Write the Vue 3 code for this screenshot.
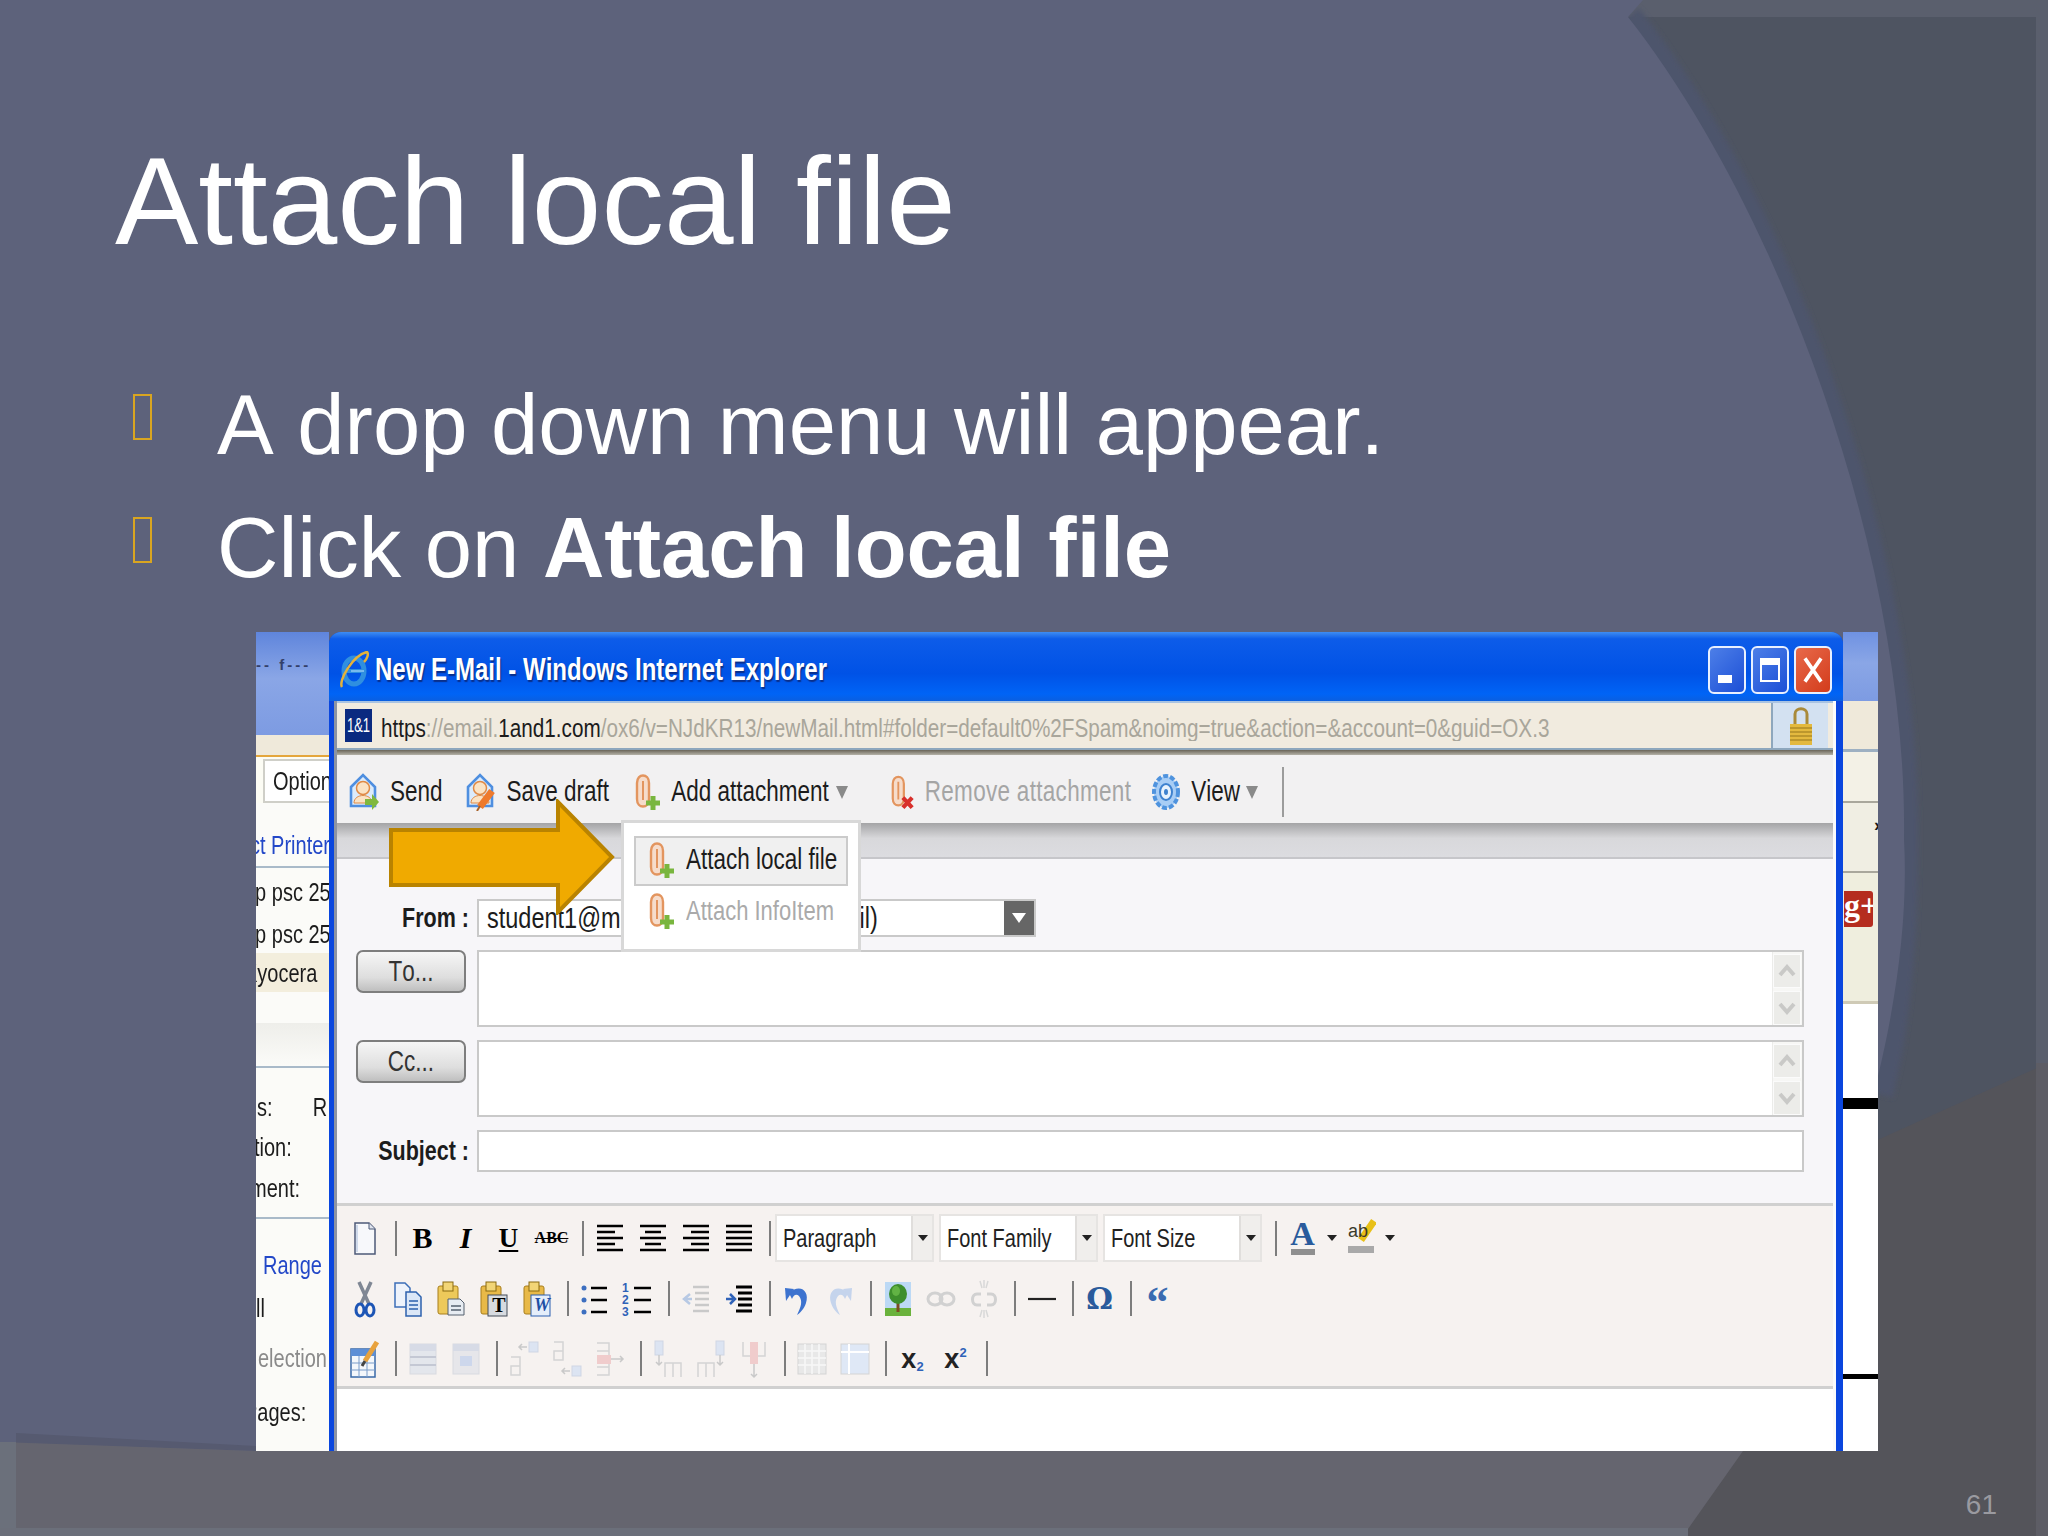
<template>
  <div class="slide">
    <!-- slide theme shapes -->
    <svg class="theme" viewBox="0 0 2048 1536" width="2048" height="1536">
      <defs>
        <filter id="soft"><feGaussianBlur stdDeviation="2.5" /></filter>
      </defs>
      <rect width="2048" height="1536" fill="#5a5f6d" />
      <rect x="1600" y="17" width="436" height="1519" fill="#4e5461" />
      <path d="M1800 1175 L2048 1063 V1536 H1600 V1400 Z" fill="#54545a" />
      <rect x="2036" y="1063" width="12" height="473" fill="#5d5d65" />
      <path d="M1628 17 C1780 210 1908 560 1904 839 C1904 920 1900 1010 1879 1094" fill="none" stroke="#4d546c" stroke-width="28" filter="url(#soft)" />
      <path d="M0 0 H1643 L1628 17 C1780 210 1908 560 1904 839 C1915 1040 1820 1310 1683 1536 H0 Z" fill="#5d627b" />
      <path d="M16 1433 L256 1446 V1451 H256 L16 1443 Z" fill="#565a70" />
      <path d="M0 1442 L256 1451 H1743 L1683 1536 H0 Z" fill="#65656f" />
      <rect y="1442" width="16" height="94" fill="#6b707b" />
      <rect y="1528" width="1688" height="8" fill="#6b6f7a" />
    </svg>

    <h1 class="title">Attach local file</h1>
    <ul class="bullets">
      <li><span class="marker"></span><span>A drop down menu will appear.</span></li>
      <li><span class="marker"></span><span>Click on <b>Attach local file</b></span></li>
    </ul>

    <div class="shot">
      <!-- page behind the popup, left side -->
      <div class="page-left">
        <div class="pl-blue"><span class="pl-dash">-- f---</span></div>
        <div class="pl-beige"></div>
        <div class="pl-option"><span class="opt-btn"><span class="s">Option</span></span></div>
        <div
          v-for="r in leftRows"
          :key="r.t + r.top + r.h"
          class="pl-row"
          :class="r.cls"
          :style="{ height: r.h + 'px', marginTop: r.top + 'px' }"
        >
          <span v-if="r.t" class="s" :style="{ marginLeft: r.x + 'px' }">{{ r.t }}</span>
          <span v-if="r.extra" class="s pl-extra">{{ r.extra }}</span>
        </div>
      </div>

      <!-- popup window -->
      <div class="win">
        <div class="titlebar">
          <svg class="ie" viewBox="0 0 30 38" width="30" height="38">
            <ellipse cx="15" cy="20" rx="10" ry="13" fill="none" stroke="#2f8fe0" stroke-width="5" />
            <path d="M6 20 H24" stroke="#2f8fe0" stroke-width="4" />
            <path d="M25 20 H12" stroke="#bfe3fa" stroke-width="1" />
            <path d="M3 36 C-1 30 14 4 28 1 C30 3 28 8 25 11" fill="none" stroke="#e3b23c" stroke-width="2.5" />
          </svg>
          <span class="win-title"><span class="s">New E-Mail - Windows Internet Explorer</span></span>
          <div class="win-btns">
            <span class="wb"><i class="min-mark"></i></span>
            <span class="wb"><i class="max-mark"></i></span>
            <span class="wb wb-close">
              <svg viewBox="0 0 38 48" width="34" height="44">
                <path d="M10 11 L28 37 M28 11 L10 37" stroke="#fff" stroke-width="4" />
              </svg>
            </span>
          </div>
        </div>

        <div class="win-body">
          <div class="addr">
            <span class="logo"><span class="logo-t">1&amp;1</span></span>
            <span class="url"><span class="s"><b class="dk">https</b>://email.<b class="dk">1and1.com</b>/ox6/v=NJdKR13/newMail.html#folder=default0%2FSpam&amp;noimg=true&amp;action=&amp;account=0&amp;guid=OX.3</span></span>
            <span class="lock-cell">
              <svg viewBox="0 0 24 38" width="24" height="38">
                <path d="M6 18 V7 C6 0 18 0 18 7 V18" fill="none" stroke="#a98a3a" stroke-width="3" />
                <rect x="1" y="17" width="22" height="21" fill="#e3b93f" />
                <path d="M1 21 H23 M1 25 H23 M1 29 H23 M1 33 H23" stroke="#b08c28" stroke-width="1.5" />
              </svg>
            </span>
          </div>
          <div class="addr-line"></div>

          <div class="toolbar">
            <div class="tb-item">
              <svg class="tb-ic" viewBox="0 0 30 38"><use href="#ic-send" /></svg>
              <span class="s">Send</span>
            </div>
            <div class="tb-item">
              <svg class="tb-ic" viewBox="0 0 30 38"><use href="#ic-draft" /></svg>
              <span class="s">Save draft</span>
            </div>
            <div class="tb-item tb-add">
              <svg class="tb-clip" viewBox="0 0 26 38"><use href="#ic-clip-add" /></svg>
              <span class="s">Add attachment</span>
              <i class="tri"></i>
            </div>
            <div class="tb-item tb-off">
              <svg class="tb-clip" viewBox="0 0 26 38"><use href="#ic-clip-del" /></svg>
              <span class="s">Remove attachment</span>
            </div>
            <div class="tb-item tb-view">
              <svg class="tb-ic" viewBox="0 0 30 38"><use href="#ic-gear" /></svg>
              <span class="s">View</span>
              <i class="tri"></i>
            </div>
            <span class="tb-sep"></span>
          </div>
          <div class="band"></div>

          <div class="form">
            <label class="lbl"><span class="s">From :</span></label>
            <div class="from-field">
              <span class="s">student1@m</span>
              <span class="s from-tail">il)</span>
              <span class="from-drop"><i></i></span>
            </div>

            <button class="addr-btn"><span class="s">To...</span></button>
            <div class="area">
              <div class="scroller">
                <span class="sb"><svg viewBox="0 0 26 30" width="26" height="30"><path d="M6 19 L13 11 L20 19" fill="none" stroke="#c9c9c7" stroke-width="4" /></svg></span>
                <span class="sb"><svg viewBox="0 0 26 30" width="26" height="30"><path d="M6 11 L13 19 L20 11" fill="none" stroke="#c9c9c7" stroke-width="4" /></svg></span>
              </div>
            </div>

            <button class="addr-btn"><span class="s">Cc...</span></button>
            <div class="area">
              <div class="scroller">
                <span class="sb"><svg viewBox="0 0 26 30" width="26" height="30"><path d="M6 19 L13 11 L20 19" fill="none" stroke="#c9c9c7" stroke-width="4" /></svg></span>
                <span class="sb"><svg viewBox="0 0 26 30" width="26" height="30"><path d="M6 11 L13 19 L20 11" fill="none" stroke="#c9c9c7" stroke-width="4" /></svg></span>
              </div>
            </div>

            <label class="lbl"><span class="s">Subject :</span></label>
            <div class="subject"></div>
          </div>

          <div class="editor-bar">
            <div v-for="(row, i) in editorRows" :key="i" class="ed-row">
              <template v-for="(it, j) in row" :key="j">
                <span v-if="it === '|'" class="sep"></span>
                <span v-else-if="it === 'drop'" class="cell-drop"><i></i></span>
                <div v-else-if="it.sel" class="sel">
                  <span class="sel-val"><span class="s">{{ it.sel }}</span></span>
                  <span class="sel-btn"><i></i></span>
                </div>
                <span v-else class="cell">
                  <svg v-if="it.i || typeof it === 'string'" class="ic" viewBox="0 0 30 40"><use :href="'#ic-' + (it.i || it)" /></svg>
                  <span v-if="it.t" class="gl" :class="it.c">{{ it.t }}<small v-if="it.small">{{ it.small }}</small></span>
                </span>
              </template>
            </div>
          </div>
          <div class="editor-body"></div>
        </div>
      </div>

      <!-- page behind the popup, right side -->
      <div class="page-right">
        <div class="pr-blue"></div>
        <div class="pr-beige"></div>
        <div class="pr-a"></div>
        <div class="pr-b"><span class="pr-x">›</span></div>
        <div class="pr-c"><span class="gplus">g+</span></div>
        <div class="pr-white"></div>
        <div class="pr-black"></div>
        <div class="pr-white2"></div>
        <div class="pr-black2"></div>
        <div class="pr-white3"></div>
      </div>

      <!-- dropdown and callout on top of the screenshot -->
      <div class="menu">
        <div class="menu-item active">
          <svg class="tb-clip" viewBox="0 0 26 38"><use href="#ic-clip-add" /></svg>
          <span class="s">Attach local file</span>
        </div>
        <div class="menu-item off">
          <svg class="tb-clip" viewBox="0 0 26 38"><use href="#ic-clip-add" /></svg>
          <span class="s">Attach InfoItem</span>
        </div>
      </div>
      <svg class="callout" viewBox="0 0 230 116" width="230" height="116">
        <path d="M3 31 H170 V3 L224 58 L170 113 V86 H3 Z" fill="#f0aa00" stroke="#b98300" stroke-width="4" />
      </svg>
    </div>

    <div class="page-num">61</div>

    <!-- icon sheet -->
    <svg class="defs" width="0" height="0">
      <symbol id="ic-send" viewBox="0 0 30 38">
        <path d="M2 14 L14 2 L26 14 V33 H2 Z" fill="#dcebfb" stroke="#4f8fe0" stroke-width="2.600" />
        <circle cx="14" cy="15" r="6.500" fill="#fbe3c4" stroke="#e08a45" stroke-width="1.500" />
        <path d="M5 30 C5 20 23 20 23 30 Z" fill="#fbe3c4" stroke="#e08a45" />
        <path d="M16 26 H23 V21 L30 29 L23 37 V32 H16 Z" fill="#7fb83f" />
      </symbol>
      <symbol id="ic-draft" viewBox="0 0 30 38">
        <path d="M2 14 L14 2 L26 14 V33 H2 Z" fill="#dcebfb" stroke="#4f8fe0" stroke-width="2.600" />
        <circle cx="14" cy="15" r="6.500" fill="#fbe3c4" stroke="#e08a45" stroke-width="1.500" />
        <path d="M5 30 C5 20 23 20 23 30 Z" fill="#fbe3c4" stroke="#e08a45" />
        <path d="M26 18 L14 34" stroke="#ee7a2c" stroke-width="7" />
        <path d="M14 33 L11 38" stroke="#a8622a" stroke-width="2" />
      </symbol>
      <symbol id="ic-clip-add" viewBox="0 0 26 38">
        <path d="M3 10 C3 0 15 0 15 10 V26 C15 36 3 36 3 26 Z" fill="#f6dccb" stroke="#e3955f" stroke-width="2.400" />
        <path d="M9 8 V27" stroke="#e3955f" stroke-width="2" />
        <path d="M19 23 V37 M12 30 H26" stroke="#79b63e" stroke-width="5" />
      </symbol>
      <symbol id="ic-clip-del" viewBox="0 0 26 38">
        <path d="M3 10 C3 0 15 0 15 10 V26 C15 36 3 36 3 26 Z" fill="#f6dccb" stroke="#e3955f" stroke-width="2.400" />
        <path d="M9 8 V27" stroke="#e3955f" stroke-width="2" />
        <path d="M14 25 L24 36 M24 25 L14 36" stroke="#d8302c" stroke-width="4.500" />
      </symbol>
      <symbol id="ic-gear" viewBox="0 0 30 38">
        <ellipse cx="15" cy="19" rx="12" ry="16" fill="#a8cdf5" stroke="#4f93de" stroke-width="4" stroke-dasharray="5 2" />
        <ellipse cx="15" cy="19" rx="6" ry="8" fill="#e9f3fd" stroke="#3f82cf" stroke-width="2" />
        <ellipse cx="15" cy="19" rx="2" ry="3" fill="#3f82cf" />
      </symbol>

      <symbol id="ic-doc" viewBox="0 0 30 40">
        <path d="M5 5 H19 L25 11 V36 H5 Z" fill="#f7f8fb" stroke="#4d5a78" stroke-width="1.5" />
        <path d="M19 5 V11 H25" fill="#dfe4ee" stroke="#4d5a78" />
        <path d="M7 7 V34" stroke="#cfd9ea" stroke-width="2" />
      </symbol>
      <symbol id="ic-al" viewBox="0 0 30 40">
        <path d="M2 8 H28 M2 14 H20 M2 20 H28 M2 26 H20 M2 32 H28" stroke="#000" stroke-width="2.600" />
      </symbol>
      <symbol id="ic-ac" viewBox="0 0 30 40">
        <path d="M2 8 H28 M7 14 H23 M2 20 H28 M7 26 H23 M2 32 H28" stroke="#000" stroke-width="2.600" />
      </symbol>
      <symbol id="ic-ar" viewBox="0 0 30 40">
        <path d="M2 8 H28 M10 14 H28 M2 20 H28 M10 26 H28 M2 32 H28" stroke="#000" stroke-width="2.600" />
      </symbol>
      <symbol id="ic-aj" viewBox="0 0 30 40">
        <path d="M2 8 H28 M2 14 H28 M2 20 H28 M2 26 H28 M2 32 H28" stroke="#000" stroke-width="2.600" />
      </symbol>

      <symbol id="ic-cut" viewBox="0 0 30 40">
        <path d="M9 3 L19 25 M21 3 L11 25" stroke="#7f8794" stroke-width="3.500" />
        <ellipse cx="10" cy="31" rx="4" ry="6" fill="none" stroke="#1d55b5" stroke-width="3" />
        <ellipse cx="20" cy="31" rx="4" ry="6" fill="none" stroke="#1d55b5" stroke-width="3" />
      </symbol>
      <symbol id="ic-copy" viewBox="0 0 30 40">
        <path d="M2 4 H12 L17 9 V28 H2 Z" fill="#eef3fb" stroke="#3d6fb8" stroke-width="1.500" />
        <path d="M13 13 H23 L28 18 V37 H13 Z" fill="#dbe7f7" stroke="#2e62ad" stroke-width="1.500" />
        <path d="M16 22 H25 M16 26 H25 M16 30 H25" stroke="#2e62ad" stroke-width="1.500" />
      </symbol>
      <symbol id="ic-paste" viewBox="0 0 30 40">
        <rect x="2" y="7" width="20" height="28" rx="2" fill="#edc95a" stroke="#a87f1c" />
        <rect x="7" y="3" width="10" height="9" fill="#f2d576" stroke="#8a6a10" />
        <path d="M12 20 H24 L28 24 V36 H12 Z" fill="#e7ecf2" stroke="#55606f" />
        <path d="M15 27 H25 M15 31 H25" stroke="#55606f" stroke-width="1.500" />
      </symbol>
      <symbol id="ic-ptext" viewBox="0 0 30 40">
        <rect x="2" y="7" width="20" height="28" rx="2" fill="#e8b948" stroke="#a87f1c" />
        <rect x="7" y="3" width="10" height="9" fill="#f2d576" stroke="#8a6a10" />
        <rect x="9" y="16" width="19" height="21" fill="#d7dbe0" stroke="#444c58" />
      </symbol>
      <symbol id="ic-pword" viewBox="0 0 30 40">
        <rect x="2" y="7" width="20" height="28" rx="2" fill="#e8b948" stroke="#a87f1c" />
        <rect x="7" y="3" width="10" height="9" fill="#f2d576" stroke="#8a6a10" />
        <rect x="9" y="16" width="19" height="21" fill="#e5eefa" stroke="#2a5fb0" />
      </symbol>
      <symbol id="ic-ul" viewBox="0 0 30 40">
        <circle cx="4" cy="9" r="2.500" fill="#3d6fc0" />
        <circle cx="4" cy="21" r="2.500" fill="#3d6fc0" />
        <circle cx="4" cy="33" r="2.500" fill="#3d6fc0" />
        <path d="M11 9 H27 M11 21 H27 M11 33 H27" stroke="#000" stroke-width="2.500" />
      </symbol>
      <symbol id="ic-ol" viewBox="0 0 30 40">
        <path d="M11 9 H28 M11 21 H28 M11 33 H28" stroke="#000" stroke-width="2.500" />
      </symbol>
      <symbol id="ic-out" viewBox="0 0 30 40">
        <path d="M12 8 H28 M14 14 H28 M14 20 H28 M14 26 H28 M12 32 H28" stroke="#c9c9c9" stroke-width="2.500" />
        <path d="M11 20 H5 M9 15 L3 20 L9 25" fill="none" stroke="#b7c9e4" stroke-width="2.500" />
      </symbol>
      <symbol id="ic-ind" viewBox="0 0 30 40">
        <path d="M12 8 H28 M14 14 H28 M14 20 H28 M14 26 H28 M12 32 H28" stroke="#000" stroke-width="2.800" />
        <path d="M2 20 H9 M6 15 L11 20 L6 25" fill="none" stroke="#2f62b8" stroke-width="2.500" />
      </symbol>
      <symbol id="ic-undo" viewBox="0 0 30 40">
        <path d="M7 14 C18 4 28 12 24 24 C22 30 18 34 15 36 C19 28 21 22 17 17 C14 14 11 17 10 20 Z" fill="#3d73cf" />
        <path d="M3 9 L12 10 L4 22 Z" fill="#3d73cf" />
      </symbol>
      <symbol id="ic-redo" viewBox="0 0 30 40">
        <path d="M23 14 C12 4 2 12 6 24 C8 30 12 34 15 36 C11 28 9 22 13 17 C16 14 19 17 20 20 Z" fill="#c5d4ec" />
        <path d="M27 9 L18 10 L26 22 Z" fill="#c5d4ec" />
      </symbol>
      <symbol id="ic-img" viewBox="0 0 30 40">
        <rect x="2" y="3" width="26" height="34" fill="#bcd9f5" />
        <rect x="2" y="29" width="26" height="8" fill="#6ab23c" />
        <path d="M15 33 V20" stroke="#7a4d22" stroke-width="3" />
        <ellipse cx="15" cy="15" rx="9" ry="10" fill="#3e8f2c" />
        <ellipse cx="13" cy="12" rx="4" ry="5" fill="#62b344" />
      </symbol>
      <symbol id="ic-link" viewBox="0 0 30 40">
        <ellipse cx="9" cy="20" rx="7" ry="6" fill="none" stroke="#d1d1d1" stroke-width="3" />
        <ellipse cx="21" cy="20" rx="7" ry="6" fill="none" stroke="#d1d1d1" stroke-width="3" />
      </symbol>
      <symbol id="ic-unlink" viewBox="0 0 30 40">
        <path d="M12 15 H8 C2 15 2 26 8 26 H12 M18 15 H22 C28 15 28 26 22 26 H18" fill="none" stroke="#d1d1d1" stroke-width="3" />
        <path d="M11 2 L13 9 M19 2 L17 9 M11 38 L13 31 M19 38 L17 31 M15 1 V9 M15 31 V39" stroke="#d8d8d8" stroke-width="1.500" />
      </symbol>
      <symbol id="ic-hr" viewBox="0 0 30 40">
        <path d="M1 20 H29" stroke="#222" stroke-width="2.200" />
      </symbol>

      <symbol id="ic-bar-a" viewBox="0 0 30 40">
        <rect x="3" y="31" width="24" height="6" fill="#8f8f8f" />
      </symbol>
      <symbol id="ic-back" viewBox="0 0 30 40">
        <path d="M28 3 L15 22" stroke="#e8c018" stroke-width="7" />
        <rect x="2" y="28" width="26" height="7" fill="#a9a9a9" />
      </symbol>

      <symbol id="ic-tedit" viewBox="0 0 30 40">
        <rect x="1" y="10" width="24" height="28" fill="#f4f7fb" stroke="#3a6aa8" stroke-width="1.500" />
        <rect x="1" y="10" width="24" height="7" fill="#5d8fd6" />
        <path d="M1 24 H25 M1 31 H25 M9 17 V38 M17 17 V38" stroke="#7b9cc9" />
        <path d="M27 3 L15 22" stroke="#e8a23c" stroke-width="5" />
        <path d="M15 22 L12 27" stroke="#444" stroke-width="3" />
      </symbol>
      <symbol id="ic-tr1" viewBox="0 0 30 40">
        <rect x="2" y="5" width="26" height="30" fill="#e3e6ec" stroke="#d8dae0" />
        <rect x="2" y="5" width="26" height="7" fill="#d7dbe6" />
        <path d="M2 18 H28 M2 26 H28" stroke="#c4c8d4" stroke-width="2" />
      </symbol>
      <symbol id="ic-tr2" viewBox="0 0 30 40">
        <rect x="2" y="5" width="26" height="30" fill="#e6e6ea" stroke="#d8dae0" />
        <rect x="2" y="5" width="26" height="7" fill="#d7dbe6" />
        <rect x="9" y="17" width="12" height="10" fill="#cdd7ec" />
      </symbol>
      <symbol id="ic-insl" viewBox="0 0 30 40">
        <path d="M2 18 H11 V27 H2 V36 H11 V27" fill="none" stroke="#d4d4d4" stroke-width="1.500" />
        <rect x="20" y="3" width="9" height="10" fill="#dce4f2" stroke="#cfd6e4" />
        <path d="M18 8 H10 M13 5 L10 8 L13 11" fill="none" stroke="#c9c9c9" stroke-width="1.500" />
      </symbol>
      <symbol id="ic-insr" viewBox="0 0 30 40">
        <path d="M2 3 H11 V12 H2 V21 H11 V12" fill="none" stroke="#d4d4d4" stroke-width="1.500" />
        <rect x="20" y="27" width="9" height="10" fill="#dce4f2" stroke="#cfd6e4" />
        <path d="M18 32 H10 M13 29 L10 32 L13 35" fill="none" stroke="#c9c9c9" stroke-width="1.500" />
      </symbol>
      <symbol id="ic-delr" viewBox="0 0 30 40">
        <path d="M2 4 H14 V36 H2 M2 12 H14 M2 28 H14" fill="none" stroke="#d4d4d4" stroke-width="1.500" />
        <rect x="2" y="16" width="14" height="9" fill="#f0cccc" />
        <path d="M16 20 H28 M25 17 L28 20 L25 23" fill="none" stroke="#c9c9c9" stroke-width="1.500" />
      </symbol>
      <symbol id="ic-col1" viewBox="0 0 30 40">
        <rect x="2" y="2" width="8" height="14" fill="#dce4f2" stroke="#cfd6e4" />
        <path d="M6 16 V26 M3 23 L6 26 L9 23" fill="none" stroke="#c9c9c9" stroke-width="1.500" />
        <path d="M12 38 V24 H28 V38 M20 24 V38" fill="none" stroke="#d4d4d4" stroke-width="1.500" />
      </symbol>
      <symbol id="ic-col2" viewBox="0 0 30 40">
        <rect x="20" y="2" width="8" height="14" fill="#dce4f2" stroke="#cfd6e4" />
        <path d="M24 16 V26 M21 23 L24 26 L27 23" fill="none" stroke="#c9c9c9" stroke-width="1.500" />
        <path d="M2 38 V24 H18 V38 M10 24 V38" fill="none" stroke="#d4d4d4" stroke-width="1.500" />
      </symbol>
      <symbol id="ic-col3" viewBox="0 0 30 40">
        <path d="M4 3 V17 H26 V3" fill="none" stroke="#d4d4d4" stroke-width="1.500" />
        <rect x="11" y="3" width="8" height="22" fill="#f0cccc" />
        <path d="M15 25 V38 M12 35 L15 38 L18 35" fill="none" stroke="#c9c9c9" stroke-width="1.500" />
      </symbol>
      <symbol id="ic-grid" viewBox="0 0 30 40">
        <rect x="1" y="5" width="28" height="30" fill="#e8e8e8" stroke="#d4d4d4" />
        <path d="M1 12 H29 M1 19 H29 M1 26 H29 M8 5 V35 M15 5 V35 M22 5 V35" stroke="#f7f7f7" stroke-width="1.500" />
      </symbol>
      <symbol id="ic-cellp" viewBox="0 0 30 40">
        <rect x="1" y="5" width="28" height="30" fill="#dfe8f6" stroke="#d4d4d4" />
        <path d="M1 13 H29 M9 5 V35" stroke="#fff" stroke-width="2" />
      </symbol>
    </svg>
  </div>
</template>

<script setup>
// Heights and offsets of the page peeking out behind the popup
const leftRows = [
  { t: 'ct Printer', h: 65, x: -6, top: 0, cls: 'link bb' },
  { t: 'np psc 25', h: 47, x: -12, top: 0 },
  { t: 'np psc 25', h: 38, x: -12, top: 0 },
  { t: 'Kyocera', h: 39, x: -12, top: 0, cls: 'beige' },
  { t: '', h: 31, x: 0, top: 0 },
  { t: '', h: 45, x: 0, top: 0, cls: 'soft bb' },
  { t: 'us:', h: 40, x: -10, top: 19, extra: 'R' },
  { t: 'tion:', h: 40, x: -2, top: 0 },
  { t: 'ment:', h: 42, x: -6, top: 0 },
  { t: '', h: 10, x: 0, top: 0, cls: 'bb' },
  { t: 'Range', h: 40, x: 7, top: 27, cls: 'link' },
  { t: 'll', h: 40, x: 0, top: 2 },
  { t: 'election', h: 40, x: 2, top: 10, cls: 'grey' },
  { t: 'Pages:', h: 40, x: -12, top: 14 }
]

const editorRows = [
  ['doc', '|', { t: 'B', c: 'g-b' }, { t: 'I', c: 'g-i' }, { t: 'U', c: 'g-u' }, { t: 'ABC', c: 'g-abc' }, '|',
    'al', 'ac', 'ar', 'aj', '|',
    { sel: 'Paragraph' }, { sel: 'Font Family' }, { sel: 'Font Size' }, '|',
    { i: 'bar-a', t: 'A', c: 'g-a' }, 'drop', { i: 'back', t: 'ab', c: 'g-ab' }, 'drop'],
  ['cut', 'copy', 'paste', { i: 'ptext', t: 'T', c: 'g-pt' }, { i: 'pword', t: 'W', c: 'g-pw' }, '|',
    'ul', { i: 'ol', t: '123', c: 'g-ol' }, '|', 'out', 'ind', '|', 'undo', 'redo', '|',
    'img', 'link', 'unlink', '|', 'hr', '|', { t: 'Ω', c: 'g-om' }, '|', { t: '“', c: 'g-q' }],
  ['tedit', '|', 'tr1', 'tr2', '|', 'insl', 'insr', 'delr', '|', 'col1', 'col2', 'col3', '|', 'grid', 'cellp', '|',
    { t: 'x', small: '2', c: 'g-x g-sub' }, { t: 'x', small: '2', c: 'g-x g-sup' }, '|']
]
</script>

<style>
html, body {
  margin: 0;
  background: #5d627b;
}
</style>

<style scoped>
.slide {
  position: relative;
  width: 2048px;
  height: 1536px;
  overflow: hidden;
  padding-top: 138px;
  box-sizing: border-box;
  color: #fff;
  font-family: "Liberation Sans", Arial, sans-serif;
  font-kerning: none;
}

.theme {
  position: absolute;
  left: 0;
  top: 0;
}

.defs {
  position: absolute;
}

.title {
  position: relative;
  margin: 0 0 100px 115px;
  font-size: 125px;
  font-weight: 400;
  line-height: 125px;
}

.bullets {
  position: relative;
  list-style: none;
  margin: 0 0 23px 133px;
  padding: 0;
  font-size: 85px;
  line-height: 123px;
}

.bullets li {
  display: flex;
  align-items: flex-start;
  height: 123px;
}

.marker {
  flex: none;
  width: 19px;
  height: 46px;
  margin: 31px 65px 0 0;
  border: 2px solid #d9a520;
  box-sizing: border-box;
}

/* embedded screenshot */
.shot {
  position: relative;
  display: flex;
  width: 1622px;
  height: 819px;
  margin-left: 256px;
  overflow: hidden;
  color: #1c1c1c;
  font-size: 22.5px;
  line-height: 26px;
  filter: blur(0.5px);
}

.s {
  display: inline-block;
  white-space: nowrap;
  transform: scaleY(1.28);
}

.page-left {
  flex: none;
  width: 73px;
  background: #fbfbf8;
  font-size: 20px;
  overflow: hidden;
}

.pl-blue {
  height: 103px;
  background: linear-gradient(#5f85dc, #8aa6e6 45%, #7d9be2);
  box-sizing: border-box;
  padding-top: 20px;
  color: #33406a;
  font-size: 15px;
  font-weight: 700;
}

.pl-dash {
  letter-spacing: 3px;
  white-space: nowrap;
}

.pl-beige {
  height: 20px;
  background: #efe9da;
}

.pl-option {
  height: 48px;
  padding: 2px 0 0 7px;
  box-sizing: border-box;
  background: #fcfcf4;
  border-top: 2px solid #e4a63c;
}

.opt-btn {
  display: flex;
  align-items: center;
  height: 40px;
  padding-left: 8px;
  background: #fff;
  border: 2px solid #cfcfc8;
  border-right: 0;
  font-size: 20px;
  overflow: hidden;
}

.pl-row {
  display: flex;
  align-items: center;
  box-sizing: border-box;
  white-space: nowrap;
  background: #fbfbf8;
}

.pl-row.link {
  color: #2348c8;
  align-items: flex-end;
  padding-bottom: 8px;
}

.pl-row.grey {
  color: #8a8a8a;
}

.pl-row.beige {
  background: #f3eedd;
}

.pl-row.soft {
  background: linear-gradient(#eeeeea, #fbfbf8);
}

.pl-row.bb {
  border-bottom: 2px solid #a9bac9;
}

.pl-extra {
  margin-left: 40px;
}

/* popup window */
.win {
  flex: none;
  display: flex;
  flex-direction: column;
  width: 1514px;
  background: #0a46de;
  border-radius: 12px 12px 0 0;
  overflow: hidden;
}

.titlebar {
  flex: none;
  display: flex;
  align-items: center;
  height: 69px;
  padding: 6px 11px 0 10px;
  box-sizing: border-box;
  background: linear-gradient(#3f8df2 0, #0d5ce9 10%, #0052e6 60%, #0064f6 90%, #0a5fe0);
  color: #fff;
}

.ie {
  flex: none;
}

.win-title {
  margin-left: 6px;
  font-size: 24px;
  font-weight: 700;
  text-shadow: 1px 1px 1px #0a2f8a;
}

.win-btns {
  display: flex;
  gap: 5px;
  margin-left: auto;
}

.wb {
  position: relative;
  display: flex;
  align-items: center;
  justify-content: center;
  width: 38px;
  height: 48px;
  box-sizing: border-box;
  border: 2px solid #e8f0ff;
  border-radius: 6px;
  background: linear-gradient(135deg, #4d7fe8, #1c4fd6);
}

.wb-close {
  background: linear-gradient(135deg, #e8694a, #d33c1c);
}

.min-mark {
  position: absolute;
  left: 8px;
  bottom: 9px;
  width: 14px;
  height: 8px;
  background: #fff;
}

.max-mark {
  width: 20px;
  height: 24px;
  box-sizing: border-box;
  border: 2px solid #fff;
  border-top-width: 7px;
}

.win-body {
  flex: 1;
  display: flex;
  flex-direction: column;
  min-height: 0;
  margin: 0 7px 0 5px;
  padding-right: 3px;
  border-left: 3px solid #8c93a3;
  background: #fbfbfb;
}

.addr {
  flex: none;
  display: flex;
  align-items: center;
  height: 49px;
  padding-left: 8px;
  box-sizing: border-box;
  background: #f1ebdf;
  border-top: 2px solid #a9c3e2;
  border-bottom: 2px solid #8ea7bd;
}

.logo {
  flex: none;
  display: flex;
  align-items: center;
  justify-content: center;
  width: 27px;
  height: 33px;
  background: #0a2a80;
  color: #fff;
}

.logo-t {
  font-size: 13px;
  transform: scaleY(1.5);
}

.url {
  flex: 1;
  margin-left: 9px;
  padding-top: 5px;
  color: #a9a69b;
  font-size: 20.7px;
  overflow: hidden;
}

.dk {
  font-weight: 400;
  color: #1c1c1c;
}

.lock-cell {
  flex: none;
  display: flex;
  align-items: center;
  justify-content: center;
  width: 57px;
  height: 100%;
  margin-right: 5px;
  background: #d3e1f1;
  border-left: 2px solid #8ea7bd;
  box-sizing: border-box;
}

.addr-line {
  flex: none;
  height: 5px;
  background: linear-gradient(#6a6558, #b5b2a8);
}

.toolbar {
  flex: none;
  display: flex;
  align-items: center;
  height: 68px;
  padding: 6px 0 0 12px;
  box-sizing: border-box;
  background: #f2f1f2;
}

.tb-item {
  display: flex;
  align-items: center;
  gap: 11px;
  margin-right: 23px;
}

.tb-add {
  margin: 0 42px 0 2px;
}

.tb-off {
  color: #a5a5a5;
  letter-spacing: 0.3px;
  margin-right: 20px;
}

.tb-view {
  gap: 10px;
  margin-right: 24px;
}

.tb-ic {
  width: 30px;
  height: 38px;
  flex: none;
}

.tb-clip {
  width: 26px;
  height: 38px;
  flex: none;
}

.tb-off .tb-clip {
  width: 24px;
}

.tri {
  width: 0;
  height: 0;
  margin-left: -4px;
  border: 6px solid transparent;
  border-top: 13px solid #8a8a8a;
  border-bottom: 0;
}

.tb-sep {
  width: 2px;
  height: 50px;
  background: #9c9c9c;
}

.band {
  flex: none;
  height: 36px;
  box-sizing: border-box;
  background: linear-gradient(#a4a4a6, #d8d8db 45%, #dcdce0);
  border-bottom: 2px solid #c6c6ca;
}

.form {
  flex: none;
  display: grid;
  grid-template-columns: 110px 1327px;
  grid-template-rows: 38px 77px 77px 42px;
  column-gap: 11px;
  row-gap: 13px;
  height: 344px;
  padding: 40px 0 0 19px;
  box-sizing: border-box;
  background: #f7f6f9;
}

.lbl {
  display: flex;
  align-items: center;
  justify-content: flex-end;
  margin-right: -3px;
  font-weight: 700;
  font-size: 21.5px;
}

.from-field {
  position: relative;
  display: flex;
  align-items: center;
  width: 559px;
  padding-left: 8px;
  box-sizing: border-box;
  background: #fff;
  border: 2px solid #c9c9c9;
  font-size: 23.5px;
}

.from-tail {
  margin-left: 239px;
}

.from-drop {
  display: flex;
  align-items: center;
  justify-content: center;
  width: 30px;
  height: 100%;
  margin-left: auto;
  background: #666;
}

.from-drop i {
  border: 7px solid transparent;
  border-top: 10px solid #fff;
  border-bottom: 0;
}

.addr-btn {
  align-self: start;
  height: 43px;
  padding: 0;
  color: #333;
  font: inherit;
  background: linear-gradient(#f6f6f6, #dedede 65%, #bfbfbf);
  border: 2px solid #7e7e7e;
  border-radius: 7px;
}

.area {
  display: flex;
  justify-content: flex-end;
  background: #fff;
  border: 2px solid #c9c9c9;
  box-sizing: border-box;
}

.scroller {
  display: flex;
  flex-direction: column;
  gap: 3px;
  width: 30px;
  padding: 2px 1px 0 0;
  box-sizing: border-box;
  background: #f7f7f5;
  border-left: 1px solid #ececea;
}

.sb {
  display: flex;
  align-items: center;
  justify-content: center;
  height: 33px;
  background: #ecece9;
  border: 1px solid #fbfbfb;
}

.subject {
  background: #fff;
  border: 2px solid #c9c9c9;
}

.editor-bar {
  flex: none;
  height: 186px;
  padding: 2px 0 0 6px;
  box-sizing: border-box;
  background: #f6f2f0;
  border-top: 3px solid #d0d0d0;
  border-bottom: 3px solid #d0d0d0;
}

.ed-row {
  display: flex;
  align-items: center;
  height: 60px;
}

.ed-row + .ed-row {
  height: 59px;
  margin-top: 1px;
}

.cell {
  position: relative;
  flex: none;
  display: flex;
  align-items: center;
  justify-content: center;
  width: 43px;
  height: 40px;
}

.ic {
  width: 30px;
  height: 40px;
}

/* letter glyphs of the editor buttons, over their icon when there is one */
.gl {
  position: absolute;
  left: 0;
  top: 0;
  display: flex;
  align-items: center;
  justify-content: center;
  width: 43px;
  height: 40px;
  color: #000;
  font-family: "Liberation Serif", serif;
  font-weight: 700;
}

.g-b {
  font-size: 30px;
}

.g-i {
  font-size: 30px;
  font-style: italic;
}

.g-u {
  font-size: 27px;
  text-decoration: underline;
  text-decoration-thickness: 2px;
  text-underline-offset: 3px;
}

.g-abc {
  font-size: 16px;
  text-decoration: line-through;
}

.g-a {
  padding-bottom: 8px;
  box-sizing: border-box;
  color: #2a5b9c;
  font-size: 34px;
}

.g-ab {
  justify-content: flex-start;
  padding: 0 0 14px 9px;
  box-sizing: border-box;
  color: #3a3a2a;
  font-family: "Liberation Sans", sans-serif;
  font-size: 18px;
  font-weight: 400;
}

.g-pt {
  padding: 12px 0 0 11px;
  box-sizing: border-box;
  font-size: 20px;
}

.g-pw {
  padding: 12px 0 0 11px;
  box-sizing: border-box;
  color: #1f4fa5;
  font-size: 18px;
  font-style: italic;
}

.g-ol {
  left: 6px;
  width: 8px;
  height: auto;
  top: 3px;
  display: block;
  word-break: break-all;
  color: #2f62b8;
  font-family: "Liberation Sans", sans-serif;
  font-size: 12px;
  line-height: 12px;
}

.g-om {
  color: #2a5b9c;
  font-family: "DejaVu Serif", serif;
  font-size: 30px;
}

.g-q {
  align-items: flex-start;
  padding-top: 2px;
  box-sizing: border-box;
  color: #3a6bb0;
  font-size: 44px;
  line-height: 44px;
}

.g-x {
  color: #222;
  font-family: "Liberation Sans", sans-serif;
  font-size: 27px;
}

.g-x small {
  color: #2f62b8;
  font-size: 13px;
}

.g-sub small {
  margin-top: 16px;
}

.g-sup small {
  margin-top: -12px;
}

.cell-drop {
  flex: none;
  display: flex;
  align-items: center;
  justify-content: center;
  width: 15px;
}

.cell-drop i,
.sel-btn i {
  border: 5px solid transparent;
  border-top: 6px solid #222;
  border-bottom: 0;
}

.sep {
  flex: none;
  width: 2px;
  height: 35px;
  margin: 0 4px 0 9px;
  background: #7d7d7d;
}

.sel {
  flex: none;
  display: flex;
  width: 159px;
  height: 48px;
  margin-right: 5px;
  box-sizing: border-box;
  background: #fff;
  border: 2px solid #e6e4e2;
  font-size: 20px;
}

.sel + .sep {
  margin-left: 8px;
}

.sel-val {
  flex: 1;
  display: flex;
  align-items: center;
  padding-left: 6px;
  color: #222;
}

.sel-btn {
  display: flex;
  align-items: center;
  justify-content: center;
  width: 19px;
  background: #f0eeec;
  border-left: 2px solid #e0dedc;
}

.editor-body {
  flex: 1;
  background: #fff;
}

.page-right {
  flex: none;
  display: flex;
  flex-direction: column;
  width: 35px;
  background: #fff;
}

.pr-blue {
  height: 69px;
  background: linear-gradient(#6f92e2, #8aa6e6 45%, #7d9be2);
}

.pr-beige {
  height: 51px;
  box-sizing: border-box;
  background: #efe9da;
  border-bottom: 3px solid #9db0c2;
}

.pr-a {
  height: 51px;
  box-sizing: border-box;
  background: #f3f1e6;
  border-bottom: 2px solid #a9a79c;
}

.pr-b {
  height: 70px;
  padding: 8px 0 0 31px;
  box-sizing: border-box;
  background: #f0eee3;
  border-bottom: 2px solid #a9a79c;
  font-weight: 700;
}

.pr-x {
  font-size: 18px;
}

.pr-c {
  height: 131px;
  padding-top: 18px;
  box-sizing: border-box;
  background: #efeede;
  border-bottom: 3px solid #cfcab6;
}

.gplus {
  display: block;
  width: 29px;
  height: 36px;
  margin-left: 1px;
  color: #fff;
  background: #b52d1f;
  border-radius: 0 3px 3px 0;
  font-family: "Liberation Serif", serif;
  font-size: 32px;
  font-weight: 700;
  line-height: 28px;
  text-align: right;
  white-space: nowrap;
  overflow: hidden;
}

.pr-white {
  height: 94px;
}

.pr-black {
  height: 11px;
  background: #000;
}

.pr-white2 {
  height: 265px;
}

.pr-black2 {
  height: 5px;
  background: #000;
}

.pr-white3 {
  flex: 1;
}

.menu {
  position: absolute;
  left: 365px;
  top: 188px;
  width: 240px;
  height: 132px;
  padding: 13px 10px 0;
  box-sizing: border-box;
  background: #fff;
  border: 3px solid #d8d8d8;
}

.menu-item {
  display: flex;
  align-items: center;
  gap: 12px;
  height: 50px;
  padding-left: 12px;
  box-sizing: border-box;
}

.menu-item.active {
  padding-bottom: 3px;
  background: #f0f0f0;
  border: 2px solid #cbcbcb;
}

.menu-item.off {
  padding-left: 14px;
  color: #aaa;
  font-size: 22px;
}

.callout {
  position: absolute;
  left: 132px;
  top: 167px;
}

.page-num {
  position: relative;
  margin-top: 40px;
  padding-right: 51px;
  color: #9a9aa0;
  font-size: 28px;
  line-height: 28px;
  text-align: right;
}
</style>
